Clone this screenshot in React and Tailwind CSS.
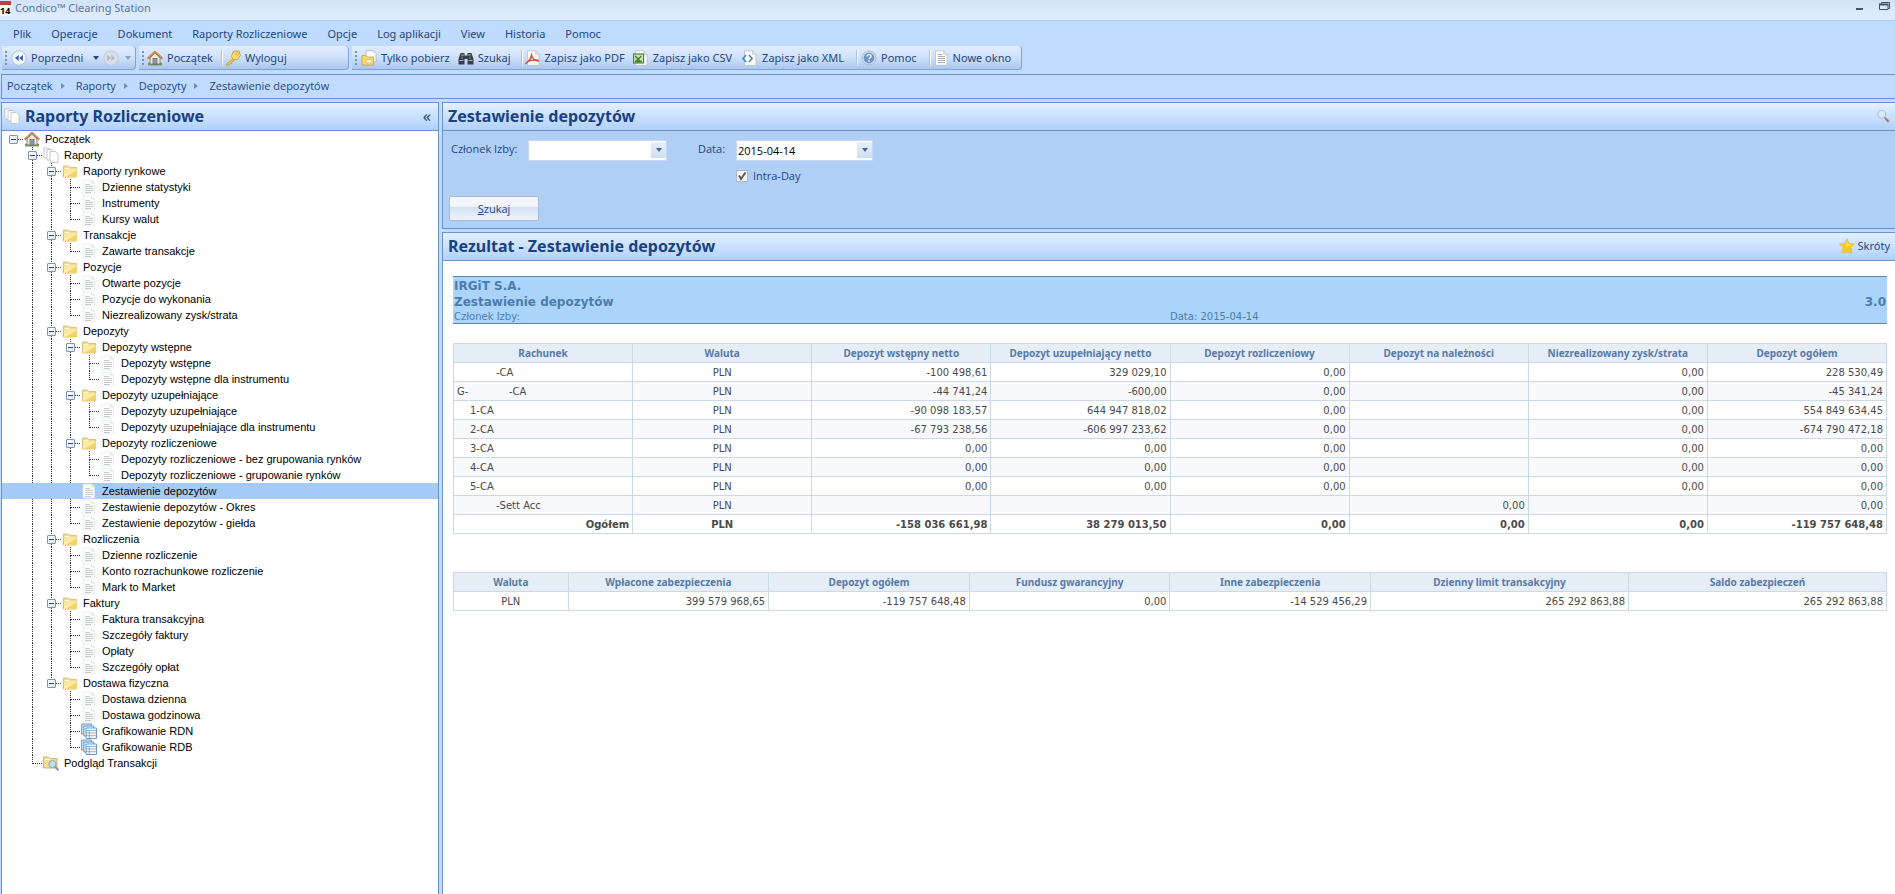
import { useState } from 'react';
import clsx from 'clsx';

const TREE = [
  {
    label: 'Początek', icon: 'house', children: [
      {
        label: 'Raporty', icon: 'pages', children: [
          { label: 'Raporty rynkowe', children: ['Dzienne statystyki', 'Instrumenty', 'Kursy walut'] },
          { label: 'Transakcje', children: ['Zawarte transakcje'] },
          { label: 'Pozycje', children: ['Otwarte pozycje', 'Pozycje do wykonania', 'Niezrealizowany zysk/strata'] },
          {
            label: 'Depozyty', children: [
              { label: 'Depozyty wstępne', children: ['Depozyty wstępne', 'Depozyty wstępne dla instrumentu'] },
              { label: 'Depozyty uzupełniające', children: ['Depozyty uzupełniające', 'Depozyty uzupełniające dla instrumentu'] },
              {
                label: 'Depozyty rozliczeniowe',
                children: ['Depozyty rozliczeniowe - bez grupowania rynków', 'Depozyty rozliczeniowe - grupowanie rynków'],
              },
              { label: 'Zestawienie depozytów', selected: true },
              'Zestawienie depozytów - Okres',
              'Zestawienie depozytów - giełda',
            ],
          },
          { label: 'Rozliczenia', children: ['Dzienne rozliczenie', 'Konto rozrachunkowe rozliczenie', 'Mark to Market'] },
          { label: 'Faktury', children: ['Faktura transakcyjna', 'Szczegóły faktury', 'Opłaty', 'Szczegóły opłat'] },
          {
            label: 'Dostawa fizyczna', children: [
              'Dostawa dzienna',
              'Dostawa godzinowa',
              { label: 'Grafikowanie RDN', icon: 'grids' },
              { label: 'Grafikowanie RDB', icon: 'grids' },
            ],
          },
        ],
      },
      { label: 'Podgląd Transakcji', icon: 'folderSearch' },
    ],
  },
];

const MENU = ['Plik', 'Operacje', 'Dokument', 'Raporty Rozliczeniowe', 'Opcje', 'Log aplikacji', 'View', 'Historia', 'Pomoc'];
const CRUMBS = ['Początek', 'Raporty', 'Depozyty', 'Zestawienie depozytów'];

const DEPOSIT_HEAD = [
  'Rachunek', 'Waluta', 'Depozyt wstępny netto', 'Depozyt uzupełniający netto',
  'Depozyt rozliczeniowy', 'Depozyt na należności', 'Niezrealizowany zysk/strata', 'Depozyt ogółem',
];

const DEPOSIT_ROWS = [
  { name: '-CA', pad: 'pl-[39px]', values: ['-100 498,61', '329 029,10', '0,00', '', '0,00', '228 530,49'] },
  { prefix: 'G-', name: '-CA', values: ['-44 741,24', '-600,00', '0,00', '', '0,00', '-45 341,24'] },
  { name: '1-CA', pad: 'pl-[13px]', values: ['-90 098 183,57', '644 947 818,02', '0,00', '', '0,00', '554 849 634,45'] },
  { name: '2-CA', pad: 'pl-[13px]', values: ['-67 793 238,56', '-606 997 233,62', '0,00', '', '0,00', '-674 790 472,18'] },
  { name: '3-CA', pad: 'pl-[13px]', values: ['0,00', '0,00', '0,00', '', '0,00', '0,00'] },
  { name: '4-CA', pad: 'pl-[13px]', values: ['0,00', '0,00', '0,00', '', '0,00', '0,00'] },
  { name: '5-CA', pad: 'pl-[13px]', values: ['0,00', '0,00', '0,00', '', '0,00', '0,00'] },
  { name: '-Sett Acc', pad: 'pl-[39px]', values: ['', '', '', '0,00', '', '0,00'] },
];

const DEPOSIT_TOTAL = ['-158 036 661,98', '38 279 013,50', '0,00', '0,00', '0,00', '-119 757 648,48'];

const BALANCE_COLS = [
  { label: 'Waluta', width: 'w-[8%]' },
  { label: 'Wpłacone zabezpieczenia', width: 'w-[14%]', value: '399 579 968,65' },
  { label: 'Depozyt ogółem', width: 'w-[14%]', value: '-119 757 648,48' },
  { label: 'Fundusz gwarancyjny', width: 'w-[14%]', value: '0,00' },
  { label: 'Inne zabezpieczenia', width: 'w-[14%]', value: '-14 529 456,29' },
  { label: 'Dzienny limit transakcyjny', width: 'w-[18%]', value: '265 292 863,88' },
  { label: 'Saldo zabezpieczeń', width: 'w-[18%]', value: '265 292 863,88' },
];

/* ---------- icons ---------- */

function Sheet() {
  return (
    <>
      <path d="M2.500.8h8l3.500 3.500v11H2.500z" fill="#fdfdfd" stroke="#b9bec6" strokeWidth=".8" />
      <path d="M10.500.8v3.500H14z" fill="#e3e6ea" stroke="#c3c8cf" strokeWidth=".6" />
    </>
  );
}

const ICONS = {
  house: (
    <>
      <path d="M1 14.500h14" stroke="#7a9a5a" strokeWidth="2" />
      <path d="M3 8v6h10V8L8 3z" fill="#f3e7d3" stroke="#8b7355" strokeWidth=".8" />
      <path d="M.8 8.600 8 1.800l7.200 6.800" fill="none" stroke="#b5794c" strokeWidth="2.200" strokeLinejoin="round" />
      <path d="M1.400 7.600 8 1.400l6.600 6.200" fill="none" stroke="#dfae7a" strokeWidth=".8" />
      <rect x="6" y="8.600" width="4" height="5.400" fill="#8a9bb0" stroke="#5d6774" strokeWidth=".7" />
      <path d="M1 14c0-2 2.400-2 2.600 0M12.400 14c.2-2 2.600-2 2.600 0" fill="#5f9a45" />
    </>
  ),
  pages: (
    <g fill="#fdfdfe" stroke="#b6bdc8" strokeWidth=".8">
      <path d="M1 1h5l2 2v8H1z" />
      <path d="M4 2.500h5l2 2v8.500H4z" />
      <path d="M7 4.500h5.500l2.500 2.500v8.500H7z" />
    </g>
  ),
  doc: (
    <>
      <path d="M2 1.200h8.500L13.500 4v11H2z" fill="#fefefe" stroke="#e3e6ea" strokeWidth=".7" />
      <path d="M10.500 1.200V4h3" fill="#eef0f3" stroke="#d8dbe0" strokeWidth=".6" />
      <path d="M4 5.500h5M4 7.500h8M4 9.500h8M4 11.500h8M4 13.500h6" stroke="#bfc2c7" strokeWidth=".9" />
    </>
  ),
  newDoc: (
    <>
      <Sheet />
      <path d="M5 4.500h4M5 6.500h7M5 8.500h7M5 10.500h7M5 12.500h7" stroke="#a3a7ae" strokeWidth=".9" />
    </>
  ),
  folder: (
    <>
      <path d="M1.500 3h5l1.500 1.500h6.500V14h-13z" fill="#f3dc90" stroke="#d3b565" strokeWidth=".8" />
      <path d="M2 6.500h12.500V14H2z" fill="#fbe9a6" />
      <path d="M3.500 14 14.500 7.500V14z" fill="#efcd55" opacity=".8" />
      <path d="M2.500 5.500h5" stroke="#fff8de" strokeWidth="1.200" />
    </>
  ),
  folderSearch: (
    <>
      <path d="M.5 2h5L7 3.500h7V13H.5z" fill="#f7dd94" stroke="#cda64e" strokeWidth=".8" />
      <path d="M2 4.500h5" stroke="#fff8de" strokeWidth="1.200" />
      <circle cx="9.500" cy="9" r="3.600" fill="#bfe0f5" stroke="#7fa6c4" />
      <path d="m12.200 11.800 3.300 3.500" stroke="#6f90ad" strokeWidth="1.800" />
    </>
  ),
  grids: (
    <g stroke="#5e93be" strokeWidth=".9">
      <path d="M.6 1h9.800v10H.6z" fill="#cfe6f7" />
      <path d="M2.800 3h10v10h-10z" fill="#dceefa" />
      <path d="M5 5h10.500v10.500H5z" fill="#f4fafe" />
      <path d="M5 7.500h10.500M5 10h10.500M5 12.700h10.500M8.300 7.500v8" fill="none" strokeWidth=".7" />
    </g>
  ),
  back: (
    <>
      <circle cx="8" cy="8" r="7.200" fill="#f1f6fd" stroke="#b3bfd2" />
      <path d="M7.700 5v6L4 8zM11.900 5v6L8.200 8z" fill="#3c629b" />
    </>
  ),
  forward: (
    <>
      <circle cx="8" cy="8" r="7.200" fill="#d9dfea" stroke="#c3c8d1" />
      <path d="M4.200 5v6L7.900 8zM8.300 5v6L12 8z" fill="#b3b8c2" />
    </>
  ),
  key: (
    <>
      <path d="m8.300 8.800-6.500 5-.3 1.400 2.400.1 1.200-1.600 1.500-.3.300-1.500 2.700-1.800z" fill="#f4d04e" stroke="#c2952b" strokeWidth=".8" />
      <path d="M8.500 1.200 14 1l1.400 4.500-2.800 4-4.300.3-2-3.300z" fill="#f9dd6c" stroke="#c2952b" strokeWidth=".8" strokeLinejoin="round" />
      <circle cx="12.200" cy="4" r="1.200" fill="#fff" stroke="#c2952b" strokeWidth=".7" />
    </>
  ),
  download: (
    <>
      <path d="M5 .7h7l3 3V12H5z" fill="#fcfdff" stroke="#a9b2bf" strokeWidth=".8" />
      <path d="M1 5.500h4L6 7h6.500v8H1z" fill="#f8d978" stroke="#cf9f3a" strokeWidth=".8" />
      <path d="M5 9.500h6v3.500H5z" fill="#fff7d8" stroke="#dcb451" strokeWidth=".7" />
    </>
  ),
  binoculars: (
    <>
      <path d="M2.500 3h4v2.500h3V3h4l2 6v5.500h-6V9h-3v5.500h-6V9z" fill="#3a3f47" />
      <path d="M1.500 10.500h4M10.500 10.500h4M3 5h3M10 5h3" stroke="#a3abb8" strokeWidth="1.200" />
      <path d="M4 6.500v2.500M12 6.500v2.500" stroke="#7e8794" />
    </>
  ),
  pdf: (
    <>
      <Sheet />
      <path d="M.8 13.500c3.200-2 6-6.400 5.800-9.700M6.500 4.200c.4 3.800 3 6.600 7 6.800M2 12c3-1.600 7-2.600 11-1.800" fill="none" stroke="#cf4436" strokeWidth="1.300" strokeLinecap="round" />
    </>
  ),
  csv: (
    <>
      <Sheet />
      <rect x=".6" y="4" width="10" height="9" fill="#cfe5bd" stroke="#4b8a30" strokeWidth="1.200" />
      <path d="m2.300 6 5 5.500M8.300 6l-5.500 5.500M2 11.500h7" stroke="#3f7d28" strokeWidth="1.400" />
    </>
  ),
  xml: (
    <>
      <Sheet />
      <path d="M4 5 1 8.500 4 12M7 5l3 3.500L7 12" fill="none" stroke="#4b8fc4" strokeWidth="1.800" />
    </>
  ),
  help: (
    <>
      <circle cx="8" cy="8" r="7" fill="#d3dfee" stroke="#a9b9cc" />
      <circle cx="8" cy="8" r="5.400" fill="#6f97c6" />
      <path d="M6 6.500c.1-2.600 4.200-2.400 4-.1-.1 1.300-2 1.400-2 2.800M8 10.300v1.500" fill="none" stroke="#fff" strokeWidth="1.300" />
    </>
  ),
  zoom: (
    <>
      <circle cx="6.500" cy="6" r="4.600" fill="#d6e8fb" stroke="#b3c2d6" strokeWidth="1.200" />
      <path d="m9.600 9.600 1.600 1.600" stroke="#8a8f98" strokeWidth="1.800" />
      <path d="m11 11 3.600 3.600" stroke="#b08468" strokeWidth="2.800" />
    </>
  ),
  star: (
    <>
      <path d="m8 .8 2.200 4.700 5.200.6-3.800 3.600 1.500 5.200-5.100-1-5.100 1 1.500-5.200L.6 6.100l5.200-.6z" fill="#fbc926" stroke="#e8b02c" strokeWidth=".7" />
      <path d="m8 2.500 1.600 3.700 3.800.5-6.500 2z" fill="#fde375" />
    </>
  ),
};

function Icon({ name, className }) {
  return (
    <svg viewBox="0 0 16 16" aria-hidden="true" className={clsx('shrink-0', className || 'size-4')}>
      {ICONS[name]}
    </svg>
  );
}

function Caret({ className }) {
  return (
    <svg viewBox="0 0 6 4" aria-hidden="true" className={clsx('h-1 w-1.5 shrink-0', className)}>
      <path d="M0 0h6L3 4z" fill="currentColor" />
    </svg>
  );
}

/* ---------- toolbar ---------- */

function ToolGroup({ className, children }) {
  return (
    <div
      className={clsx(
        'flex h-6 items-center rounded-r-sm border-r border-b border-[#7fa5d8] bg-linear-to-b from-[#e1edfe] via-[#cfe1fa] to-[#a9c6ee] pl-[3px]',
        className
      )}
    >
      <span className="h-3.5 border-l-2 border-dotted border-[#6f93c6]" />
      {children}
    </div>
  );
}

function ToolButton({ icon, className, children }) {
  return (
    <button type="button" className={clsx('flex items-center gap-1 whitespace-nowrap', className)}>
      <Icon name={icon} />
      {children}
    </button>
  );
}

function Separator() {
  return <span className="h-4 border-r border-l border-r-white border-l-[#a8c2e6]" />;
}

/* ---------- tree ---------- */

// One 19x16 cell of the dotted connector lines in front of a node.
function Guide({ up, down, across, children }) {
  return (
    <span className="relative flex h-4 w-[19px] shrink-0">
      <span className="w-[9px]" />
      <span className="flex flex-1 flex-col">
        <span className={clsx('h-[9px] border-dotted border-[#333]', up && 'border-l', across && 'border-b')} />
        <span className={clsx('h-[7px] border-dotted border-[#333]', down && 'border-l')} />
      </span>
      {children}
    </span>
  );
}

function TreeNode({ node, last, trail }) {
  const [open, setOpen] = useState(true);
  const { label, icon, children, selected } = typeof node === 'string' ? { label: node } : node;
  const level = trail.length;

  return (
    <li>
      <div className={clsx('flex h-4 items-center pl-0.5', selected && 'bg-[#a6caf7]')}>
        {trail.map((line, i) => (
          <Guide key={i} up={line && !selected} down={line && !selected} />
        ))}
        <Guide up={level > 0 && !selected} down={level > 0 && !last && !selected} across={!selected}>
          {children && (
            <button
              type="button"
              aria-label={label}
              aria-expanded={open}
              onClick={() => setOpen(!open)}
              className="absolute top-1 left-[5px] flex size-[9px] items-center justify-center rounded-[1px] border border-[#8293ad] bg-linear-to-br from-white to-[#dde2ea]"
            >
              <span className="h-px w-[5px] bg-[#35496b]" />
            </button>
          )}
        </Guide>
        <Icon name={icon || (children ? 'folder' : 'doc')} className="ml-px size-4" />
        <span className="pl-[5px] whitespace-nowrap">{label}</span>
      </div>
      {children && open && (
        <ul>
          {children.map((child, i) => (
            <TreeNode
              key={i}
              node={child}
              last={i === children.length - 1}
              trail={[...trail, level > 0 && !last]}
            />
          ))}
        </ul>
      )}
    </li>
  );
}

/* ---------- panels ---------- */

function PanelHeader({ icon, title, children }) {
  return (
    <header className="flex h-7 items-center border-b border-[#6a93c9] bg-linear-to-b from-[#e3f0ff] to-[#afd1fd] pr-[5px] pb-0.5">
      {icon && <Icon name={icon} className="ml-0.5 size-4" />}
      <h2 className="flex-1 pl-[5px] font-['Noto_Sans',sans-serif] text-base leading-6 font-bold text-[#1a4180]">{title}</h2>
      {children}
    </header>
  );
}

function Th({ className, children }) {
  return (
    <th className={clsx('h-[19px] border border-[#cbd8e6] bg-[#e5edf6] p-0 text-center font-["Noto_Sans",sans-serif] font-bold text-[#587aa8]', className)}>
      {children}
    </th>
  );
}

function Td({ className, children }) {
  return <td className={clsx('h-[19px] border border-[#cbd8e6] px-[3px] pt-0.5 pb-0', className)}>{children}</td>;
}

export default function App() {
  return (
    <div className="flex min-h-screen flex-col bg-[#bfdbff] font-['Noto_Sans',sans-serif] text-[11px] leading-4 text-[#25467f]">
      {/* title bar */}
      <div className="flex h-[21px] items-start justify-between overflow-hidden border-b border-[#b0cbec] bg-linear-to-b from-[#d3e3f8] to-[#e2edfc]">
        <div className="flex items-center gap-1 text-[#5577a5]">
          <span className="w-[11px] border-t-4 border-[#b8433f] bg-[#f6f6f6] text-[9px] leading-[11px] font-bold text-black">14</span>
          <span>Condico™ Clearing Station</span>
        </div>
        <div className="flex items-start gap-4 pr-[5px] text-[#44536b]">
          <button type="button" aria-label="Minimalizuj" className="mt-2 h-0.5 w-[7px] bg-current" />
          <button type="button" aria-label="Przywróć" className="mt-0.5">
            <svg viewBox="0 0 11 8" className="h-2 w-[11px]" fill="none" stroke="currentColor">
              <path d="M2.500 2V.5h8v6H9" />
              <path d="M.5 3v4.500H9V3" />
              <path d="M0 2.500h9.500" strokeWidth="2" />
            </svg>
          </button>
        </div>
      </div>

      <nav className="flex h-[25px] items-center gap-5 pl-[13px]">
        {MENU.map((item) => (
          <button key={item} type="button" className="whitespace-nowrap">{item}</button>
        ))}
      </nav>

      {/* toolbar */}
      <div className="flex h-7 items-start gap-[3px] pl-0.5">
        <ToolGroup className="w-[134px]">
          <ToolButton icon="back" className="ml-1">Poprzedni</ToolButton>
          <Caret className="ml-2.5" />
          <button type="button" aria-label="Następny" className="ml-1"><Icon name="forward" /></button>
          <Caret className="ml-1.5 text-[#8da3c2]" />
        </ToolGroup>
        <ToolGroup className="w-[210px]">
          <ToolButton icon="house" className="mr-2 ml-[3px]">Początek</ToolButton>
          <Separator />
          <ToolButton icon="key" className="ml-0.5">Wyloguj</ToolButton>
        </ToolGroup>
        <ToolGroup className="pr-2.5">
          <ToolButton icon="download" className="mr-2 ml-1">Tylko pobierz</ToolButton>
          <ToolButton icon="binoculars" className="mr-2.5">Szukaj</ToolButton>
          <Separator />
          <ToolButton icon="pdf" className="mr-2 ml-0.5">Zapisz jako PDF</ToolButton>
          <ToolButton icon="csv" className="mr-2.5">Zapisz jako CSV</ToolButton>
          <ToolButton icon="xml" className="mr-3">Zapisz jako XML</ToolButton>
          <Separator />
          <ToolButton icon="help" className="mr-3 ml-[3px]">Pomoc</ToolButton>
          <Separator />
          <ToolButton icon="newDoc" className="ml-0.5">Nowe okno</ToolButton>
        </ToolGroup>
      </div>

      {/* breadcrumb */}
      <nav className="ml-px flex h-[25px] items-center border-y border-l border-[#6a93c9] pb-px pl-[5px] font-['Open_Sans',sans-serif]">
        {CRUMBS.map((crumb, i) => (
          <span key={crumb} className="flex items-center">
            {i > 0 && <Caret className="mr-2.5 ml-[7px] -rotate-90 text-[#6d8dbd]" />}
            <a href="#" className="whitespace-nowrap">{crumb}</a>
          </span>
        ))}
      </nav>

      <div className="mt-[3px] flex flex-1 gap-[3px] pl-px">
        <aside className="w-[438px] shrink-0 border border-b-0 border-[#6a93c9] bg-white">
          <PanelHeader icon="pages" title="Raporty Rozliczeniowe">
            <button type="button" aria-label="Zwiń" className="pr-0.5 text-base text-[#1a4180]">«</button>
          </PanelHeader>
          <ul className="font-['Liberation_Sans',sans-serif] text-black">
            {TREE.map((node) => (
              <TreeNode key={node.label} node={node} last trail={[]} />
            ))}
          </ul>
        </aside>

        <main className="flex min-w-0 flex-1 flex-col gap-[3px] font-['Open_Sans',sans-serif]">
          <section className="border border-r-0 border-[#6a93c9] bg-[#b0cff7]">
            <PanelHeader title="Zestawienie depozytów">
              <button type="button" aria-label="Pokaż filtr"><Icon name="zoom" className="size-3.5" /></button>
            </PanelHeader>
            <form className="h-[97px] pt-[9px] pl-1.5">
              <div className="flex items-start">
                <label htmlFor="member" className="w-[79px] pt-px pl-0.5">Członek Izby:</label>
                <div className="relative w-[139px]">
                  <select id="member" className="h-[21px] w-full appearance-none border border-[#c5d8f0] bg-white px-1">
                    <option></option>
                  </select>
                  <span className="pointer-events-none absolute top-0.5 right-px flex h-4 w-[15px] items-center justify-center bg-linear-to-b from-[#e6effa] to-[#cfdff3] text-[#4b678f]">
                    <Caret />
                  </span>
                </div>
                <label htmlFor="date" className="w-[69px] pt-px pl-[31px]">Data:</label>
                <div>
                  <div className="flex h-[21px] w-[137px] items-start border border-[#c5d8f0] bg-white">
                    <input id="date" type="text" defaultValue="2015-04-14" className="h-[19px] min-w-0 flex-1 pl-px text-black outline-none" />
                    <button type="button" aria-label="Wybierz datę" className="mt-px flex h-4 w-[15px] items-center justify-center bg-linear-to-b from-[#e6effa] to-[#cfdff3] text-[#4b678f]">
                      <Caret />
                    </button>
                  </div>
                  <label className="mt-[7px] flex items-center gap-[5px]">
                    <span className="relative flex size-3">
                      <input type="checkbox" defaultChecked className="peer size-3 appearance-none border border-[#a9b8cc] bg-[#f4f4f2]" />
                      <svg viewBox="0 0 12 12" className="pointer-events-none absolute inset-0 hidden peer-checked:block">
                        <path d="M3 5.500 5 9l4.500-6.500" fill="none" stroke="#555" strokeWidth="1.800" />
                      </svg>
                    </span>
                    Intra-Day
                  </label>
                </div>
              </div>
              <button
                type="button"
                className="mt-3 h-[25px] w-[90px] rounded-xs border border-[#a8bcd8] bg-linear-to-b from-[#f3f7fc] from-40% via-[#d5e2f4] via-45% to-[#eef3fa]"
              >
                <u>S</u>zukaj
              </button>
            </form>
          </section>

          <section className="flex-1 border border-r-0 border-b-0 border-[#6a93c9] bg-white">
            <PanelHeader title="Rezultat - Zestawienie depozytów">
              <button type="button" className="flex items-center gap-[3px] font-['Noto_Sans',sans-serif]"><Icon name="star" />Skróty</button>
            </PanelHeader>

            <div className="pt-[15px] pr-2 pl-2.5 font-['DejaVu_Sans',sans-serif] text-[10px] text-[#4a4a4a]">
              <div className="border-y border-[#5f87b0] bg-[#aad4fc] px-px pt-px text-[#4d7cab]">
                <h3 className="text-xs leading-4 font-bold">IRGiT S.A.</h3>
                <div className="flex justify-between text-xs leading-4 font-bold">
                  <span>Zestawienie depozytów</span>
                  <span>3.0</span>
                </div>
                <div className="grid grid-cols-2 leading-[13px]">
                  <span>Członek Izby:</span>
                  <span>Data: 2015-04-14</span>
                </div>
              </div>

              <table className="mt-[19px] w-full table-fixed border-collapse leading-[14px]">
                <thead>
                  <tr>
                    {DEPOSIT_HEAD.map((h) => <Th key={h}>{h}</Th>)}
                  </tr>
                </thead>
                <tbody>
                  {DEPOSIT_ROWS.map((row, i) => (
                    <tr key={i} className="even:bg-[#f7f9fd]">
                      <Td>
                        <span className={clsx('flex', row.pad)}>
                          {row.prefix && <span className="w-[52px]">{row.prefix}</span>}
                          {row.name}
                        </span>
                      </Td>
                      <Td className="text-center">PLN</Td>
                      {row.values.map((v, j) => <Td key={j} className="text-right">{v}</Td>)}
                    </tr>
                  ))}
                  <tr className="font-bold">
                    <Td className="text-right">Ogółem</Td>
                    <Td className="text-center">PLN</Td>
                    {DEPOSIT_TOTAL.map((v, j) => <Td key={j} className="text-right">{v}</Td>)}
                  </tr>
                </tbody>
              </table>

              <table className="mt-[38px] w-full table-fixed border-collapse leading-[14px]">
                <thead>
                  <tr>
                    {BALANCE_COLS.map((c) => <Th key={c.label} className={c.width}>{c.label}</Th>)}
                  </tr>
                </thead>
                <tbody>
                  <tr>
                    {BALANCE_COLS.map((c) => (
                      <Td key={c.label} className={c.value ? 'text-right' : 'text-center'}>{c.value || 'PLN'}</Td>
                    ))}
                  </tr>
                </tbody>
              </table>
            </div>
          </section>
        </main>
      </div>
    </div>
  );
}
